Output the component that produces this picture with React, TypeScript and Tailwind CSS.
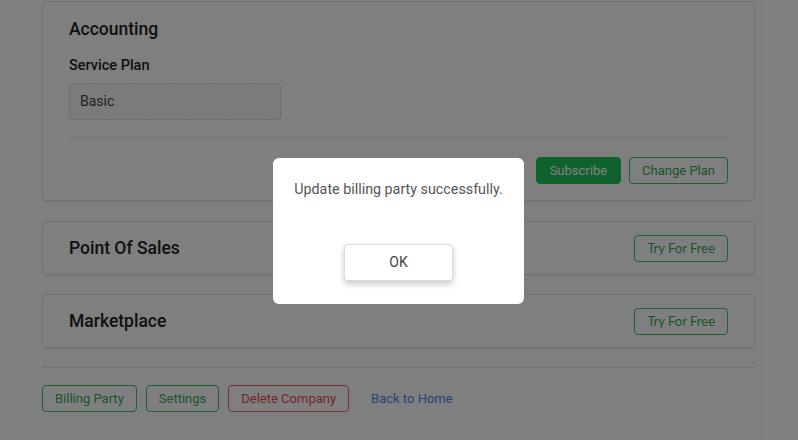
import React from 'react'

const font = { fontFamily: 'Roboto, "Noto Sans", sans-serif' }

function OutlineButton({ children, tone = 'green', lato = false }: { children: React.ReactNode; tone?: 'green' | 'red'; lato?: boolean }) {
  const toneClass =
    tone === 'red'
      ? 'border-[#f06a6a] text-[#ea4a4a]'
      : 'border-[#3cc462] text-[#35a955]'
  return (
    <button
      className={`h-[27px] rounded-[4px] border bg-white px-[12px] text-[13px] leading-none ${toneClass} ${
        lato ? 'font-["Lato",sans-serif]' : ''
      }`}
    >
      {children}
    </button>
  )
}

function ServiceCard({ title }: { title: string }) {
  return (
    <div className="flex h-[54px] items-center justify-between rounded-[4px] border border-[#e2e2e2] bg-white px-[26px] shadow-[0_1px_2px_rgba(0,0,0,0.06)]">
      <h2 className="text-[17.5px] font-medium leading-[24px] text-[#222]">{title}</h2>
      <OutlineButton lato>Try For Free</OutlineButton>
    </div>
  )
}

export default function App() {
  return (
    <div className="relative h-[440px] w-full overflow-hidden bg-white" style={font}>
      {/* page */}
      <div className="ml-[42px] mr-[43px] pt-px">
        <div className="rounded-[4px] border border-[#e2e2e2] bg-white px-[26px] pb-[16px] pt-[15px] shadow-[0_1px_2px_rgba(0,0,0,0.06)]">
          <h2 className="text-[17.5px] font-medium leading-[24px] text-[#222]">Accounting</h2>
          <div className="mt-[15px] text-[14.5px] font-medium leading-[20px] text-[#222]">Service Plan</div>
          <div className="mt-[7px] flex h-[37px] w-[212px] items-center rounded-[4px] border border-dashed border-[#d0d0d0] bg-[#f6f6f6] px-[10px] text-[14px] text-[#444]">
            Basic
          </div>
          <div className="mt-[17px] border-t border-[#ececec]" />
          <div className="mt-[19px] flex justify-end gap-[8px]">
            <button className="h-[27px] rounded-[4px] border border-[#1fc556] bg-[#1fc556] px-[13px] text-[13px] leading-none text-white">
              Subscribe
            </button>
            <OutlineButton>Change Plan</OutlineButton>
          </div>
        </div>

        <div className="mt-[20px] flex flex-col gap-[19px]">
          <ServiceCard title="Point Of Sales" />
          <ServiceCard title="Marketplace" />
        </div>

        <div className="mt-[19px] border-t border-[#e8e8e8]" />

        <div className="mt-[17px] flex items-center">
          <div className="flex gap-[9px]">
            <OutlineButton>Billing Party</OutlineButton>
            <OutlineButton>Settings</OutlineButton>
            <OutlineButton tone="red">Delete Company</OutlineButton>
          </div>
          <a className="ml-[22px] text-[13px] text-[#4d86f0]">Back to Home</a>
        </div>
      </div>

      {/* backdrop */}
      <div className="absolute inset-0 bg-black/50" />

      {/* dialog */}
      <div className="absolute left-[273px] top-[158px] flex h-[146px] w-[251px] flex-col items-center rounded-[6px] bg-white pt-[21px]">
        <p className="text-[14.3px] leading-[20px] text-[#555]">Update billing party successfully.</p>
        <button className="mt-[45px] h-[37px] w-[109px] rounded-[4px] border border-[#dcdcdc] bg-white text-[14px] text-[#444] shadow-[0_3px_6px_rgba(0,0,0,0.22)]">
          OK
        </button>
      </div>
    </div>
  )
}
